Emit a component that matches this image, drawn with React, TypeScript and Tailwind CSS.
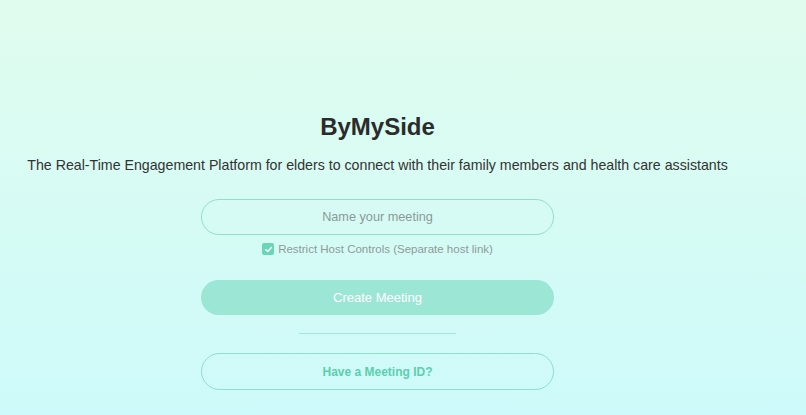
import React from "react";

export default function App() {
  return (
    <div
      className="w-full min-h-screen bg-gradient-to-b from-[#e0fcee] to-[#cdfafa]"
      style={{ fontFamily: '"Liberation Sans", Arial, sans-serif' }}
    >
      <div className="w-[755px] h-[415px] flex flex-col items-center pt-[111px]">
        <h1 className="text-[24px] leading-[32px] font-bold text-[#2b2b2b]">ByMySide</h1>
        <p className="mt-[12px] text-[14.2px] leading-[20px] text-[#333333] whitespace-nowrap">
          The Real-Time Engagement Platform for elders to connect with their family members and health care assistants
        </p>
        <div className="mt-[24px] w-[353px] flex flex-col items-center">
          <input
            type="text"
            placeholder="Name your meeting"
            className="w-full h-[36px] rounded-full border border-[#8fdfc9] bg-transparent text-center text-[12.7px] text-[#555] placeholder:text-[#8a9a96] outline-none"
          />
          <label className="mt-[6px] flex items-center gap-[4px] h-[16px] text-[11.5px] leading-[16px] text-[#8c9c98]">
            <span className="w-[12px] h-[12px] rounded-[2px] bg-[#6ad6b8] flex items-center justify-center">
              <svg width="9" height="9" viewBox="0 0 10 10" fill="none">
                <path d="M2 5.2 L4.2 7.3 L8.2 2.8" stroke="white" strokeWidth="1.6" strokeLinecap="round" strokeLinejoin="round" />
              </svg>
            </span>
            <span>Restrict Host Controls (Separate host link)</span>
          </label>
          <button className="mt-[23px] w-full h-[35px] rounded-full bg-[#9ce6d6] text-white text-[13px]">
            Create Meeting
          </button>
          <div className="mt-[18px] w-[157px] h-px bg-[#a6e4dc]" />
          <button className="mt-[19px] w-full h-[37px] rounded-full border border-[#8fdfc9] bg-transparent text-[#5ccfae] text-[12px] font-bold">
            Have a Meeting ID?
          </button>
        </div>
      </div>
    </div>
  );
}
